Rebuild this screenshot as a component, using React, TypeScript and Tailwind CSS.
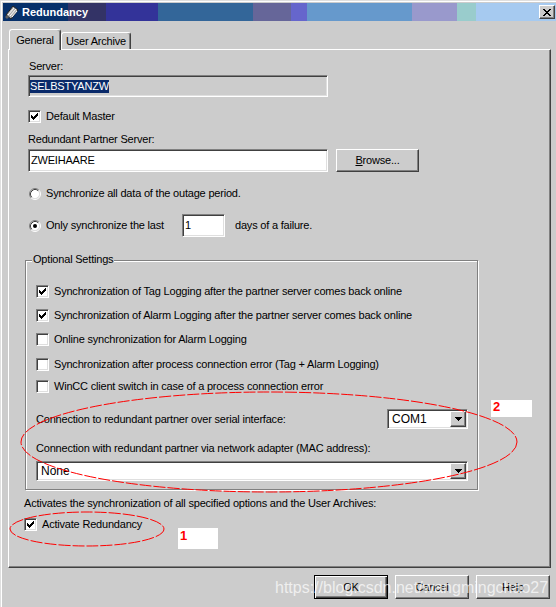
const sunken =
  'border border-t-[#808080] border-l-[#808080] border-r-white border-b-white shadow-[inset_1px_1px_0_#404040,inset_-1px_-1px_0_#dfdfdf]'
const raised =
  'border border-t-white border-l-white border-r-[#404040] border-b-[#404040] shadow-[inset_-1px_-1px_0_#808080]'

// classic 7x7 tick, one rect per run of pixels
const TICK: [number, number, number][] = [
  [6, 0, 1], [5, 1, 2], [0, 2, 1], [4, 2, 3], [0, 3, 2], [3, 3, 3], [0, 4, 5], [1, 5, 3], [2, 6, 1],
]

const CLOSE_X: [number, number, number][] = [
  [0, 0, 2], [6, 0, 2], [1, 1, 2], [5, 1, 2], [2, 2, 4], [3, 3, 2], [2, 4, 4], [1, 5, 2], [5, 5, 2], [0, 6, 2], [6, 6, 2],
]

const TITLE_BANDS = [
  'w-[65px] bg-[#06306a]',
  'w-[38px] bg-[#333366]',
  'w-[52px] bg-[#333399]',
  'w-[95px] bg-[#336699]',
  'w-[38px] bg-[#666699]',
  'w-[16px] bg-[#6666cc]',
  'w-[105px] bg-[#6699cc]',
  'w-[45px] bg-[#9999cc]',
  'w-[19px] bg-[#99cccc]',
  'flex-1 bg-[#a6caf0]',
]

function Pixels({ runs, w, h }: { runs: [number, number, number][]; w: number; h: number }) {
  return (
    <svg width={w} height={h} viewBox={`0 0 ${w} ${h}`} shapeRendering="crispEdges">
      {runs.map(([x, y, l], i) => (
        <rect key={i} x={x} y={y} width={l} height={1} fill="#000" />
      ))}
    </svg>
  )
}

function CheckBox({ checked = false }: { checked?: boolean }) {
  return (
    <span className={`flex h-[13px] w-[13px] shrink-0 items-center justify-center bg-white ${sunken}`}>
      {checked && <Pixels runs={TICK} w={7} h={7} />}
    </span>
  )
}

function Radio({ checked = false }: { checked?: boolean }) {
  return (
    <svg width="12" height="12" viewBox="0 0 12 12" className="shrink-0">
      <circle cx="6" cy="6" r="4.5" fill="#fff" />
      <path d="M2.11 9.89A5.5 5.5 0 0 1 9.89 2.11" fill="none" stroke="#808080" />
      <path d="M9.89 2.11A5.5 5.5 0 0 1 2.11 9.89" fill="none" stroke="#fff" />
      <path d="M2.82 9.18A4.5 4.5 0 0 1 9.18 2.82" fill="none" stroke="#404040" />
      <path d="M9.18 2.82A4.5 4.5 0 0 1 2.82 9.18" fill="none" stroke="#dfdfdf" />
      {checked && <circle cx="6" cy="6" r="2" fill="#000" />}
    </svg>
  )
}

function DropArrow() {
  return (
    <span className={`flex h-[16px] w-[16px] shrink-0 items-center justify-center bg-[#cccccc] ${raised}`}>
      <Pixels runs={[[0, 0, 7], [1, 1, 5], [2, 2, 3], [3, 3, 1]]} w={7} h={4} />
    </span>
  )
}

function Select({ value, className }: { value: string; className: string }) {
  return (
    <div className={`flex h-[20px] items-center bg-white p-[1px] ${sunken} ${className}`}>
      <span className="flex-1 pl-[3px] text-[12px] tracking-normal">{value}</span>
      <DropArrow />
    </div>
  )
}

function Button({ label, isDefault = false }: { label: React.ReactNode; isDefault?: boolean }) {
  return (
    <div
      className={
        isDefault
          ? 'flex h-[24px] w-[74px] items-center justify-center border border-black shadow-[inset_1px_1px_0_#fff,inset_-1px_-1px_0_#404040,inset_-2px_-2px_0_#808080]'
          : `flex h-[24px] w-[74px] items-center justify-center ${raised}`
      }
    >
      {label}
    </div>
  )
}

function CheckRow({ label, checked = false, className = '' }: { label: string; checked?: boolean; className?: string }) {
  return (
    <div className={`flex h-[13px] items-center gap-[5px] ${className}`}>
      <CheckBox checked={checked} />
      <span>{label}</span>
    </div>
  )
}

function AppIcon() {
  return (
    <svg width="16" height="16" viewBox="0 0 16 16" className="shrink-0">
      <path d="M2 11 L9 2 L14 6 L7 15 Z" fill="#b0b0b0" stroke="#202020" strokeWidth="1" />
      <path d="M4 11 L10 4 M6 12 L12 5 M8 13 L13 7" stroke="#ffffff" strokeWidth="1" />
      <path d="M1 13 L3 11 L5 13 L3 15 Z" fill="#606060" />
    </svg>
  )
}

export default function App() {
  return (
    <div className="relative h-[607px] w-[556px] overflow-hidden border-l border-t border-[#dfdfdf] bg-[#cccccc] font-['Liberation_Sans',Arial,sans-serif] text-[11px] leading-[13px] tracking-[-0.2px] text-black shadow-[inset_1px_1px_0_#fff]">
      {/* Title bar */}
      <div className="relative ml-[2px] mt-[2px] flex h-[18px] items-center">
        <div className="absolute inset-0 flex">
          {TITLE_BANDS.map((c) => (
            <div key={c} className={c} />
          ))}
        </div>
        <div className="relative ml-[1px]">
          <AppIcon />
        </div>
        <span className="relative ml-[2px] text-[11px] font-bold tracking-normal text-white">Redundancy</span>
        <div className={`relative ml-auto mr-[1px] flex h-[14px] w-[16px] items-center justify-center bg-[#cccccc] ${raised}`}>
          <Pixels runs={CLOSE_X} w={8} h={7} />
        </div>
      </div>

      {/* Tabs */}
      <div className="ml-[8px] mt-[8px] flex h-[20px] items-end">
        <div className="relative z-10 -mb-[1px] flex h-[21px] w-[52px] items-center justify-center rounded-t-[3px] border-l border-r border-t border-l-white border-r-[#404040] border-t-white bg-[#cccccc] shadow-[inset_-1px_0_0_#808080]">
          General
        </div>
        <div className="flex h-[17px] w-[70px] items-center justify-center rounded-t-[3px] border-l border-r border-t border-l-white border-r-[#404040] border-t-white shadow-[inset_-1px_0_0_#808080]">
          User Archive
        </div>
      </div>

      {/* Tab page */}
      <div className="ml-[7px] flex h-[519px] w-[543px] flex-col border border-b-[#404040] border-l-white border-r-[#404040] border-t-white shadow-[inset_-1px_-1px_0_#808080]">
        <div className="ml-[20px] mt-[10px] h-[13px]">Server:</div>
        <div className={`ml-[19px] mt-[2px] flex h-[22px] w-[300px] items-center pl-[1px] ${sunken}`}>
          <span className="bg-[#0a2a6a] text-white">SELBSTYANZW</span>
        </div>
        <CheckRow label="Default Master" checked className="ml-[19px] mt-[13px]" />
        <div className="ml-[19px] mt-[10px] h-[13px]">Redundant Partner Server:</div>
        <div className="ml-[19px] mt-[3px] flex h-[23px] items-center">
          <div className={`flex h-[23px] w-[300px] items-center bg-white pl-[2px] ${sunken}`}>ZWEIHAARE</div>
          <div className="ml-[8px]">
            <div className={`flex h-[23px] w-[83px] items-center justify-center ${raised}`}>
              <span>
                <span className="underline">B</span>rowse...
              </span>
            </div>
          </div>
        </div>
        <div className="ml-[20px] mt-[15px] flex h-[13px] items-center gap-[5px]">
          <Radio />
          <span>Synchronize all data of the outage period.</span>
        </div>
        <div className="ml-[20px] mt-[14px] flex h-[23px] items-center">
          <Radio checked />
          <span className="ml-[5px] w-[136px]">Only synchronize the last</span>
          <div className={`flex h-[23px] w-[43px] items-center bg-white pl-[2px] ${sunken}`}>1</div>
          <span className="ml-[10px]">days of a failure.</span>
        </div>

        {/* Optional Settings group */}
        <div className="relative ml-[16px] mt-[23px] flex h-[230px] w-[453px] flex-col border border-[#808080] pl-[10px] shadow-[inset_1px_1px_0_#fff,1px_1px_0_#fff]">
          <span className="absolute -top-[8px] left-[6px] bg-[#cccccc] px-[1px]">Optional Settings</span>
          <CheckRow
            label="Synchronization of Tag Logging after the partner server comes back online"
            checked
            className="mt-[24px]"
          />
          <CheckRow
            label="Synchronization of Alarm Logging after the partner server comes back online"
            checked
            className="mt-[11px]"
          />
          <CheckRow label="Online synchronization for Alarm Logging" className="mt-[11px]" />
          <CheckRow
            label="Synchronization after process connection error (Tag + Alarm Logging)"
            className="mt-[12px]"
          />
          <CheckRow label="WinCC client switch in case of a process connection error" className="mt-[9px]" />
          <div className="mt-[16px] flex h-[20px] items-center justify-between pr-[9px]">
            <span>Connection to redundant partner over serial interface:</span>
            <Select value="COM1" className="w-[81px]" />
          </div>
          <div className="mt-[13px] h-[13px]">Connection with redundant partner via network adapter (MAC address):</div>
          <Select value="None" className="mt-[6px] w-[432px]" />
        </div>

        <div className="ml-[15px] mt-[7px] h-[13px]">
          Activates the synchronization of all specified options and the User Archives:
        </div>
        <CheckRow label="Activate Redundancy" checked className="ml-[15px] mt-[8px]" />
      </div>

      {/* Dialog buttons */}
      <div className="mt-[7px] flex justify-end gap-[7px] pr-[6px]">
        <Button label="OK" isDefault />
        <Button label="Cancel" />
        <Button label="Help" />
      </div>

      {/* Annotations drawn over the screenshot */}
      <svg className="pointer-events-none absolute left-0 top-0 z-20" width="556" height="607">
        <ellipse cx="268" cy="441" rx="248" ry="50" fill="none" stroke="#ff0000" strokeDasharray="12 2" />
        <ellipse cx="86" cy="528" rx="77" ry="17" fill="none" stroke="#ff0000" strokeDasharray="12 2" />
      </svg>
      <div className="absolute left-[490px] top-[399px] z-20 h-[17px] w-[41px] bg-white pl-[2px] text-[13px] font-bold leading-[14px] tracking-normal text-[#ff0000]">
        2
      </div>
      <div className="absolute left-[177px] top-[527px] z-20 h-[21px] w-[40px] bg-white pl-[2px] text-[13px] font-bold leading-[16px] tracking-normal text-[#ff0000]">
        1
      </div>
      <div className="pointer-events-none absolute left-[274px] top-[578px] z-30 text-[16px] leading-[18px] tracking-normal text-white/70">
        https://blog.csdn.net/wangmingchao27
      </div>
    </div>
  )
}
